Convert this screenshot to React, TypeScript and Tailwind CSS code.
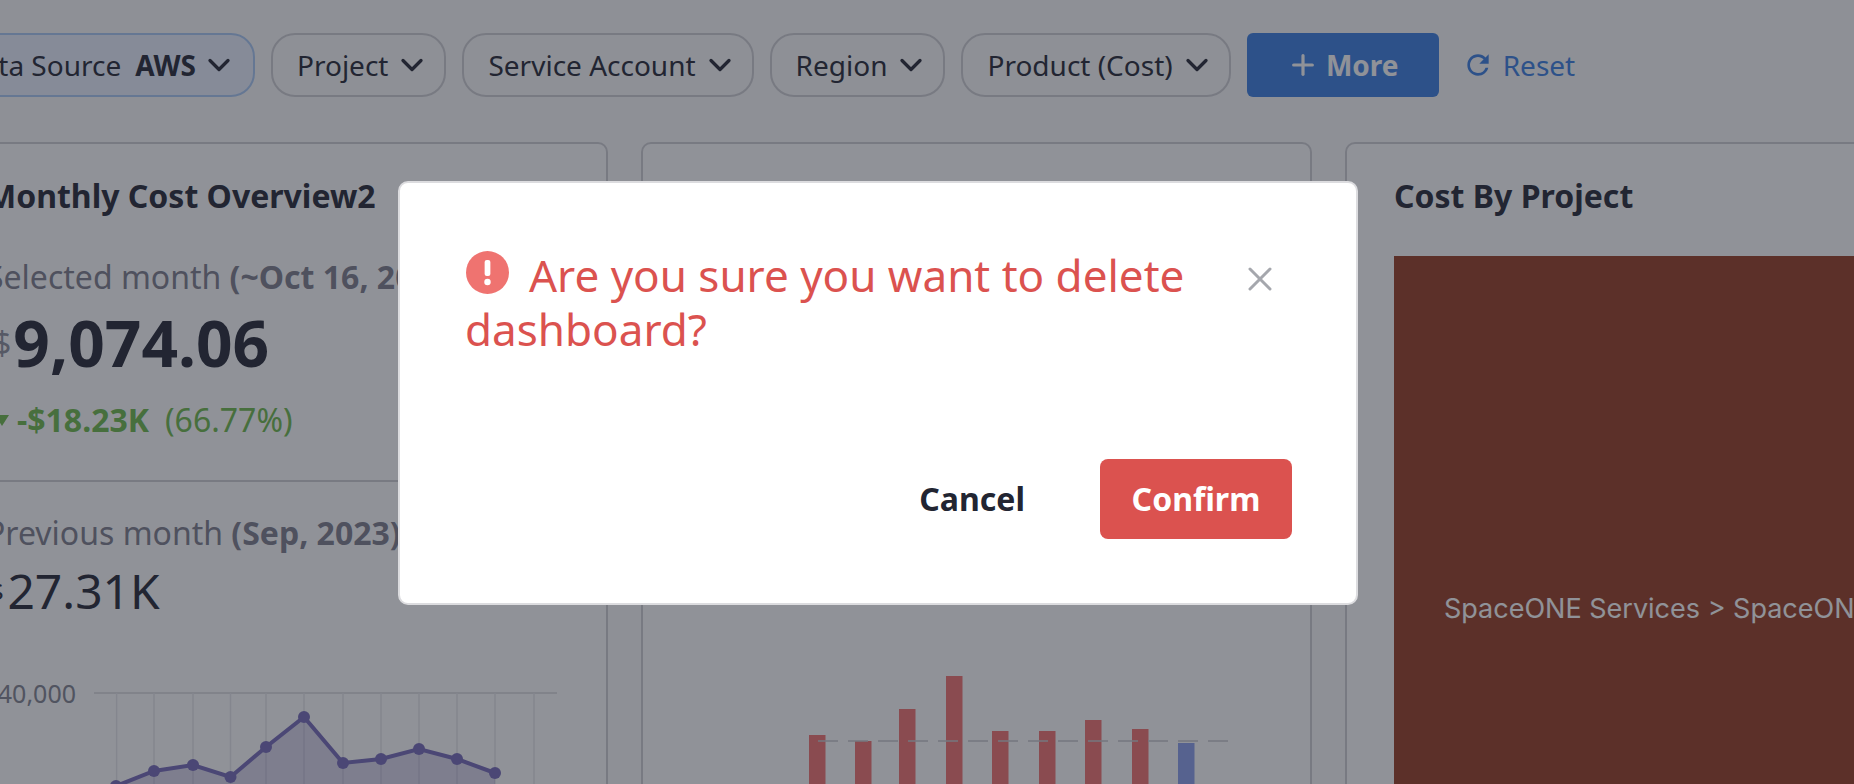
import { ChevronDown, Plus, X } from "lucide-react";
import { MdRefresh } from "react-icons/md";

const filters = ["Project", "Service Account", "Region", "Product (Cost)"];

const xLines = [116.6, 154, 193, 230.5, 266, 304, 343, 381, 419, 457, 495, 534];
const linePoints = [
  [116, 786],
  [154, 771],
  [193, 765],
  [230.5, 777],
  [266, 747],
  [304, 717],
  [343, 763],
  [381, 759],
  [419, 749],
  [457, 759],
  [495, 773],
];

const bars = [
  { x: 809, top: 735, color: "#f2716e" },
  { x: 855, top: 741, color: "#f2716e" },
  { x: 899, top: 709, color: "#f2716e" },
  { x: 946, top: 676, color: "#f2716e" },
  { x: 992, top: 731, color: "#f2716e" },
  { x: 1039, top: 731, color: "#f2716e" },
  { x: 1085, top: 720, color: "#f2716e" },
  { x: 1132, top: 729, color: "#f2716e" },
  { x: 1178, top: 743, color: "#8a9fec" },
];

const FilterPill = ({ label }: { label: string }) => (
  <button className="flex h-[64px] items-center gap-[15px] rounded-[24px] border-2 border-[#cfcfd3] pr-[23px] pl-[24px] text-[28px] text-[#222532]">
    {label}
    <ChevronDown size={36} strokeWidth={2.2} className="-mx-[9px]" />
  </button>
);

const App = () => {
  return (
    <div
      className="relative h-[784px] w-[1854px] overflow-hidden bg-[#fafafa] text-[#222532]"
      style={{ fontFamily: '"Noto Sans", sans-serif' }}
    >
      {/* Filter bar */}
      <div className="flex h-[97px] items-end gap-[16px]">
        <button className="-ml-[60px] flex h-[64px] w-[315px] shrink-0 items-center justify-end gap-[14px] rounded-[24px] border-2 border-[#a9c9f5] bg-[#eaf1ff] pr-[25px] text-[28px]">
          <span className="whitespace-nowrap">Data Source</span>
          <span className="font-bold">AWS</span>
          <ChevronDown size={36} strokeWidth={2.2} className="-mx-[9px]" />
        </button>
        {filters.map((f) => (
          <FilterPill key={f} label={f} />
        ))}
        <button className="flex h-[64px] w-[192px] items-center justify-center gap-[7px] rounded-[6px] bg-[#387de0] text-[28px] font-bold text-white">
          <Plus size={32} strokeWidth={2.4} />
          More
        </button>
        <button className="ml-[11px] flex h-[64px] items-center gap-[9px] text-[28px] text-[#387de0]">
          <MdRefresh size={32} className="-ml-[4px]" />
          Reset
        </button>
      </div>

      {/* Widgets */}
      <div className="-ml-[63px] mt-[45px] flex gap-[33px]">
        <div className="h-[800px] w-[671px] shrink-0 rounded-[10px] border-2 border-[#cfcfd3] bg-white">
          <div className="px-[47px] pt-[32px]">
            <h2 className="whitespace-nowrap text-[32px] leading-[40px] font-bold">Monthly Cost Overview2</h2>
            <p className="mt-[41px] whitespace-nowrap text-[32px] leading-[40px] text-[#7c7d8b]">
              Selected month <b>(~Oct 16, 2023)</b>
            </p>
            <p className="mt-[10px] flex items-center text-[64px] leading-[72px] font-bold">
              <span className="mr-[2px] ml-[7px] text-[32px] font-normal text-[#8a8c98]">$</span>9,074.06
            </p>
            <p className="mt-[22px] ml-[9px] flex items-center gap-[8px] text-[32px] leading-[38px] text-[#6cb848]">
              <span className="h-0 w-0 border-x-[7px] border-t-[11px] border-x-transparent border-t-[#6cb848]" />
              <b>-$18.23K</b>
              <span className="ml-[8px]">(66.77%)</span>
            </p>
          </div>
          <div className="mt-[41px] border-t-2 border-[#cfcfd3] px-[47px] pt-[31px]">
            <p className="whitespace-nowrap text-[32px] leading-[40px] text-[#7c7d8b]">
              Previous month <b>(Sep, 2023)</b>
            </p>
            <p className="mt-[8px] flex items-center text-[48px] leading-[60px]">
              <span className="mr-[3.5px] ml-[3px] text-[26px]">$</span>27.31K
            </p>
          </div>
        </div>

        <div className="h-[800px] w-[671px] shrink-0 rounded-[10px] border-2 border-[#cfcfd3] bg-white" />

        <div className="h-[800px] w-[671px] shrink-0 rounded-[10px] border-2 border-[#cfcfd3] bg-white px-[47px] pt-[32px]">
          <h2 className="text-[32px] leading-[40px] font-bold">Cost By Project</h2>
          <div className="mt-[40px] flex h-[704px] flex-col justify-center overflow-hidden bg-[#963b20] pt-[3px] pl-[50px]">
            <span
              className="whitespace-nowrap text-[27px] text-white"
              style={{ fontFamily: "Inter, sans-serif" }}
            >
              SpaceONE Services &gt; SpaceONE Console
            </span>
          </div>
        </div>
      </div>

      {/* Charts lie on a free canvas over the cards */}
      <svg className="absolute top-0 left-0" width="1854" height="784">
        <line x1="94" x2="557" y1="693" y2="693" stroke="#d6d6da" strokeWidth="1.5" />
        {xLines.map((x) => (
          <line key={x} x1={x} x2={x} y1="693" y2="784" stroke="#e6e6ea" strokeWidth="1.5" />
        ))}
        <polygon
          points={`116,786 ${linePoints.map((p) => p.join(",")).join(" ")} 495,786`}
          fill="#6a5fb0"
          fillOpacity="0.25"
        />
        <polyline
          points={linePoints.map((p) => p.join(",")).join(" ")}
          fill="none"
          stroke="#7569b8"
          strokeWidth="4"
        />
        {linePoints.map(([x, y]) => (
          <circle key={x} cx={x} cy={y} r="6" fill="#7569b8" />
        ))}
        {bars.map((b) => (
          <rect key={b.x} x={b.x} y={b.top} width="16.5" height={784 - b.top} fill={b.color} />
        ))}
        <line
          x1="818"
          x2="1228"
          y1="741"
          y2="741"
          stroke="#c8c8cc"
          strokeWidth="1.5"
          strokeDasharray="20 10"
        />
      </svg>
      <span className="absolute top-[676px] right-[1778px] text-[25px] leading-[34px] text-[#80828e]">
        40,000
      </span>

      {/* Backdrop */}
      <div className="absolute inset-0 bg-[#222532]/50" />

      {/* Modal */}
      <div className="absolute top-[181px] left-[398px] flex h-[424px] w-[960px] flex-col rounded-[10px] border-2 border-[#dcdcdf] bg-white pt-[65px] pr-[64px] pb-[64px] pl-[65px]">
        <div className="flex items-start justify-between">
          <h3 className="w-[741px] text-[44px] leading-[54px] text-[#db524f]">
            <svg
              className="-mt-[10px] mr-[20px] ml-[1px] -mb-[2px] inline-block align-baseline"
              width="43"
              height="43"
              viewBox="0 0 24 24"
            >
              <circle cx="12" cy="12" r="12" fill="#ef7370" />
              <rect x="10.4" y="5" width="3.2" height="9" rx="1.2" fill="#fff" />
              <circle cx="12" cy="17.3" r="1.8" fill="#fff" />
            </svg>
            Are you sure you want to delete dashboard?
          </h3>
          <button className="mt-[11px] mr-[12px] text-[#a5a7ad]">
            <X size={40} strokeWidth={1.8} />
          </button>
        </div>
        <div className="mt-auto flex items-center justify-end gap-[75px]">
          <button className="text-[32px] font-bold text-[#222532]">Cancel</button>
          <button className="flex h-[80px] w-[192px] items-center justify-center rounded-[8px] bg-[#db524f] text-[32px] font-bold text-white">
            Confirm
          </button>
        </div>
      </div>
    </div>
  );
};

export default App;
